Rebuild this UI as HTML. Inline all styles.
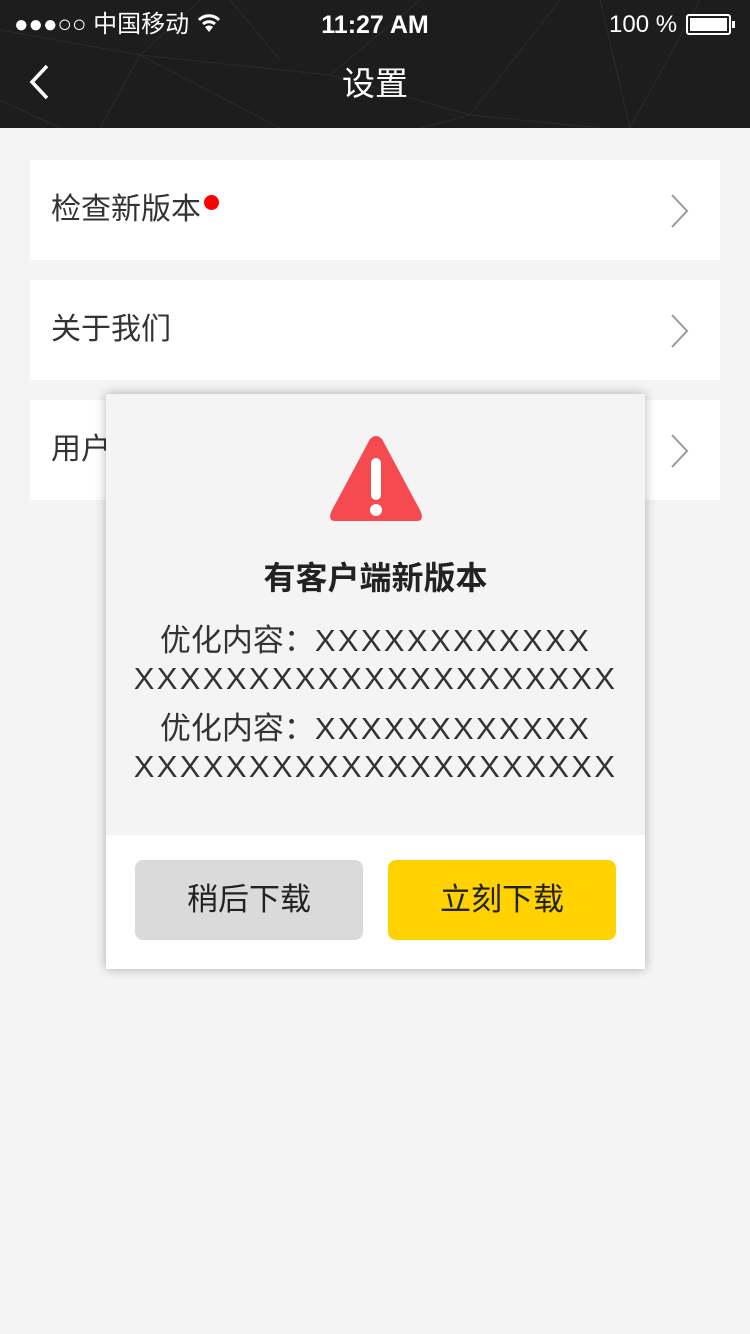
<!DOCTYPE html>
<html><head><meta charset="utf-8"><style>
*{margin:0;padding:0;box-sizing:border-box}
body{width:750px;height:1334px;background:#f4f4f4;font-family:"Liberation Sans","Noto Sans CJK SC",sans-serif;position:relative;overflow:hidden}
.hdr{position:absolute;left:0;top:0;width:750px;height:128px;background:#1d1d1d;color:#fff}
.row{position:absolute;left:30px;width:690px;height:100px;background:#fff;font-size:30px;color:#333;line-height:100px;padding-left:21px}
.chev{position:absolute;right:30px;top:33px}
.modal{position:absolute;left:106px;top:394px;width:539px;height:575px;background:#f4f4f4;box-shadow:0 0 10px rgba(0,0,0,.3)}
.foot{position:absolute;left:0;top:441px;width:539px;height:134px;background:#fff}
.btn{position:absolute;top:25px;width:228px;height:80px;border-radius:8px;font-size:31px;line-height:80px;text-align:center;color:#222}
.t{position:absolute;left:0;width:539px;text-align:center;color:#333}
.x{letter-spacing:2.35px}
</style></head><body>
<div class="hdr">
<svg width="750" height="128" style="position:absolute;left:0;top:0" stroke="#2b2b2b" stroke-width="1" fill="none">
<path d="M0 30 L140 55 L280 128 M140 55 L200 0 M140 55 L100 128 M140 55 L330 75 L470 115 L560 0 M330 75 L420 0 M470 115 L420 128 M470 115 L600 128 M600 0 L630 128 L700 0 M0 100 L60 128 M230 0 L280 60"/>
</svg>
<div style="position:absolute;left:14px;top:10px;font-size:24px;line-height:30px">●●●○○ 中国移动</div>
<svg style="position:absolute;left:197px;top:13px" width="24" height="20" viewBox="0 0 24 20"><path d="M2 7 A14 14 0 0 1 22 7" stroke="#fff" stroke-width="3" fill="none"/><path d="M6 11 A9 9 0 0 1 18 11" stroke="#fff" stroke-width="3" fill="none"/><path d="M12 19 L8 14 A6 6 0 0 1 16 14Z" fill="#fff"/></svg>
<div style="position:absolute;left:0;width:750px;top:10px;text-align:center;font-size:25px;font-weight:bold;line-height:30px">11:27 AM</div>
<div style="position:absolute;left:609px;top:10px;font-size:24px;line-height:30px">100 %</div>
<div style="position:absolute;left:686px;top:14px;width:45px;height:21px;border:2px solid #fff;border-radius:3px;padding:2px"><div style="background:#fff;width:100%;height:100%"></div></div>
<div style="position:absolute;left:732px;top:21px;width:3px;height:7px;background:#fff"></div>
<svg style="position:absolute;left:28px;top:64px" width="22" height="36"><path d="M19 2 L4 18 L19 34" stroke="#fff" stroke-width="3.5" fill="none"/></svg>
<div style="position:absolute;left:0;width:750px;top:64px;text-align:center;font-size:33px;line-height:40px">设置</div>
</div>
<div class="row" style="top:160px">检查新版本<span style="display:inline-block;width:15px;height:15px;border-radius:50%;background:#f00;vertical-align:top;margin-top:35px;margin-left:3px"></span><svg class="chev" width="20" height="36"><path d="M2 2 L17 18 L2 34" stroke="#999" stroke-width="2" fill="none"/></svg></div>
<div class="row" style="top:280px">关于我们<svg class="chev" width="20" height="36"><path d="M2 2 L17 18 L2 34" stroke="#999" stroke-width="2" fill="none"/></svg></div>
<div class="row" style="top:400px">用户协议<svg class="chev" width="20" height="36"><path d="M2 2 L17 18 L2 34" stroke="#999" stroke-width="2" fill="none"/></svg></div>
<div class="modal">
<svg style="position:absolute;left:223px;top:42px" width="94" height="86" viewBox="0 0 94 86"><path d="M41 3 Q47 -3 53 3 L92 76 Q95 85 88 85 L6 85 Q-1 85 2 76 Z" fill="#f54b50"/><rect x="42" y="22" width="10" height="42" rx="5" fill="#fff"/><circle cx="47" cy="74" r="6" fill="#fff"/></svg>
<div class="t" style="top:164px;font-size:32px;font-weight:bold;line-height:40px;color:#222">有客户端新版本</div>
<div class="t" style="top:228px;font-size:31px;line-height:38px">优化内容：<span class="x">XXXXXXXXXXXX</span><br><span class="x">XXXXXXXXXXXXXXXXXXXXX</span></div>
<div class="t" style="top:316px;font-size:31px;line-height:38px">优化内容：<span class="x">XXXXXXXXXXXX</span><br><span class="x">XXXXXXXXXXXXXXXXXXXXX</span></div>
<div class="foot">
<div class="btn" style="left:29px;background:#dadada">稍后下载</div>
<div class="btn" style="left:282px;background:#ffd200">立刻下载</div>
</div>
</div>
</body></html>
